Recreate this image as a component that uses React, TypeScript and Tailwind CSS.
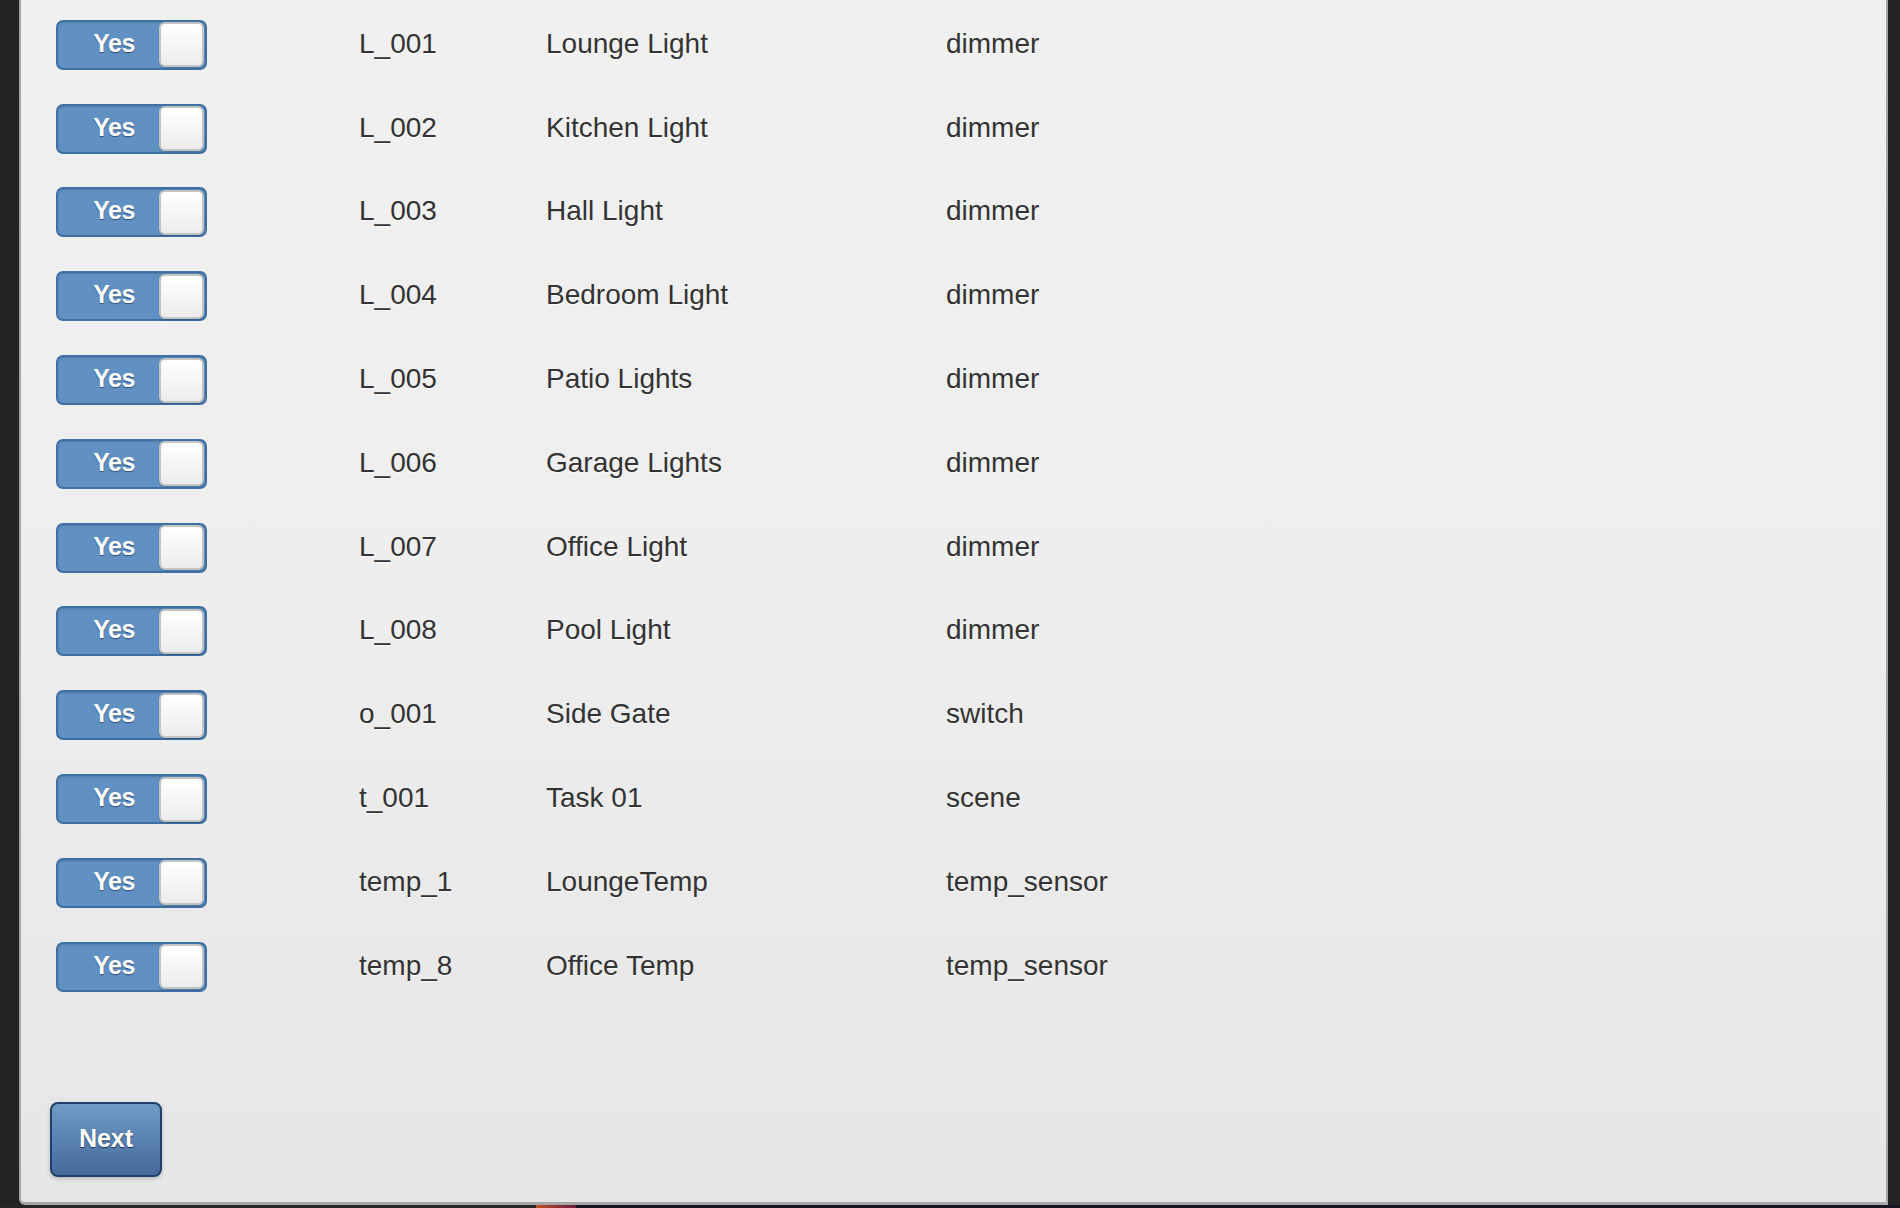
import React from "react";

const rows: [string, string, string][] = [
  ["L_001", "Lounge Light", "dimmer"],
  ["L_002", "Kitchen Light", "dimmer"],
  ["L_003", "Hall Light", "dimmer"],
  ["L_004", "Bedroom Light", "dimmer"],
  ["L_005", "Patio Lights", "dimmer"],
  ["L_006", "Garage Lights", "dimmer"],
  ["L_007", "Office Light", "dimmer"],
  ["L_008", "Pool Light", "dimmer"],
  ["o_001", "Side Gate", "switch"],
  ["t_001", "Task 01", "scene"],
  ["temp_1", "LoungeTemp", "temp_sensor"],
  ["temp_8", "Office Temp", "temp_sensor"],
];

function Toggle() {
  return (
    <div className="flex items-center w-[151px] h-[50px] rounded-[7px] border-2 border-[#3f70a4] bg-[#6191c2] shadow-[inset_0_1px_2px_rgba(0,0,0,0.15)]">
      <span className="ml-[21px] w-[70px] text-center text-[25px] leading-none font-bold text-white tracking-[-0.5px] [text-shadow:0_1px_1px_rgba(20,50,90,0.7)] -mt-[3px]">
        Yes
      </span>
      <div className="ml-auto mr-[1px] w-[45px] h-[45px] rounded-[6px] border-2 border-[#c4c4c4] bg-gradient-to-b from-white to-[#ececec] shadow-[0_1px_1px_rgba(0,0,0,0.2)]" />
    </div>
  );
}

export default function App() {
  return (
    <div
      className="w-[1900px] h-[1208px] bg-[#232323] flex flex-col overflow-hidden"
      style={{ fontFamily: '"Liberation Sans", Arial, sans-serif' }}
    >
      <div className="flex h-[1205px]">
        <div className="w-[19px] shrink-0" />
        <div className="w-[1869px] h-[1205px] shrink-0 border-l-2 border-r-2 border-b-[3px] border-[#a6a6a6] rounded-bl-[6px] bg-gradient-to-b from-[#f0f0f0] via-[#eeeeee] to-[#e6e6e6] flex flex-col">
          <div className="pt-[3px] flex flex-col">
            {rows.map(([id, name, type]) => (
              <div
                key={id}
                className="h-[83.8px] grid grid-cols-[303px_187px_400px_1fr] items-center pl-[35px] text-[28px] text-[#333] [text-shadow:0_1px_0_rgba(255,255,255,0.8)]"
              >
                <Toggle />
                <span className="-mt-[2px]">{id}</span>
                <span className="-mt-[2px]">{name}</span>
                <span className="-mt-[2px]">{type}</span>
              </div>
            ))}
          </div>
          <button className="mt-[93px] ml-[29px] w-[112px] h-[75px] rounded-[8px] border-2 border-[#1f4069] bg-gradient-to-b from-[#6f9cc6] to-[#46699b] text-white text-[25px] font-bold [text-shadow:0_1px_1px_rgba(10,30,60,0.8)] shadow-[0_2px_4px_rgba(0,0,0,0.2)] flex items-center justify-center">
            Next
          </button>
        </div>
        <div className="flex-1" />
      </div>
      <div className="flex h-[3px]">
        <div className="w-[536px] bg-[#262626]" />
        <div className="w-[40px] bg-gradient-to-r from-[#c05020] to-[#6a1a3a]" />
        <div className="flex-1 bg-[#1d1422]" />
      </div>
    </div>
  );
}
